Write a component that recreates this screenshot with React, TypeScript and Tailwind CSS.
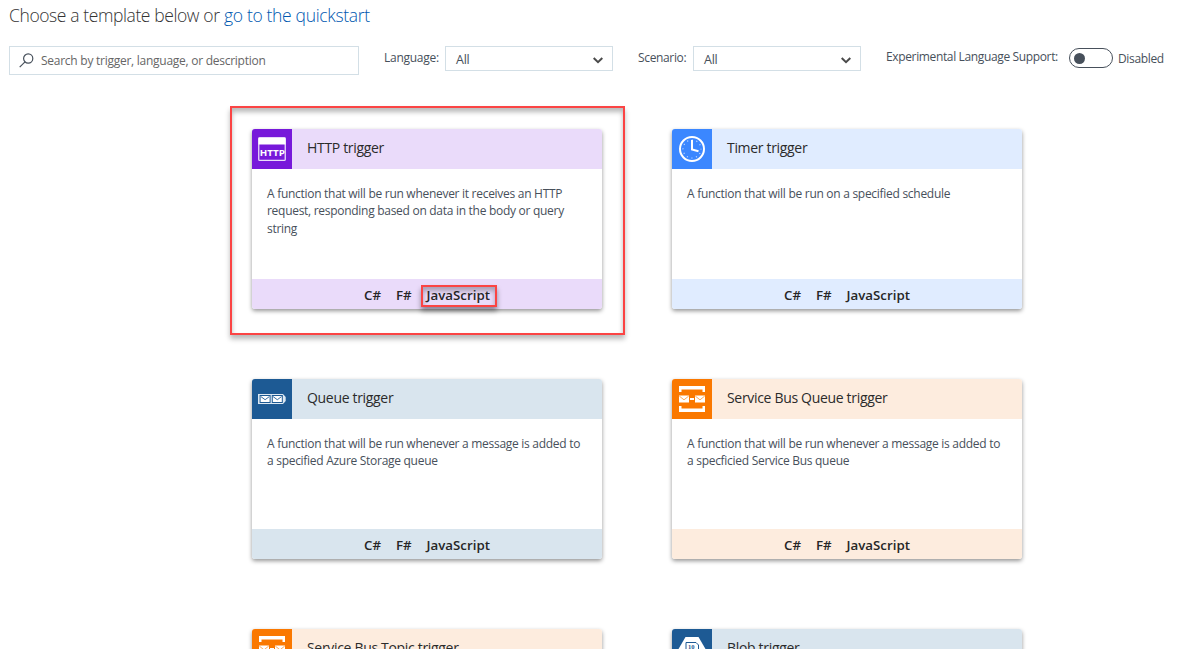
import React from "react";

type Trigger = {
  title: string;
  text: string[];
  accent: string;
  tint: string;
  icon: React.ReactNode;
  highlighted?: boolean;
};

const HttpIcon = () => (
  <svg width="40" height="40" viewBox="0 0 40 40">
    <rect x="6.75" y="9" width="26.5" height="22.4" rx="1" fill="none" stroke="#e9dcfa" strokeWidth="1.3" />
    <rect x="6.5" y="8.5" width="27" height="7" fill="#fff" />
    <text x="20.3" y="26.6" textAnchor="middle" textLength="25" lengthAdjust="spacingAndGlyphs" fontSize="9.6" fontWeight="700" fill="#fff" fontFamily="Open Sans, sans-serif">HTTP</text>
  </svg>
);

const TimerIcon = () => (
  <svg width="40" height="40" viewBox="0 0 40 40" fill="none" stroke="#fff">
    <circle cx="20" cy="20" r="12" strokeWidth="2" />
    <path d="M20 11V20.5L26.5 22.3" strokeWidth="2" />
    <circle cx="20" cy="20" r="9" strokeWidth="1.2" strokeDasharray="1.2 3.512" strokeDashoffset="0.6" opacity=".65" />
  </svg>
);

const Envelope = ({ x, y, w = 9, h = 7, line }: { x: number; y: number; w?: number; h?: number; line: string }) => (
  <g>
    <rect x={x} y={y} width={w} height={h} fill="#fff" />
    <path d={`M${x + 0.3} ${y + 0.6}L${x + w / 2} ${y + h * 0.62}L${x + w - 0.3} ${y + 0.6}`} fill="none" stroke={line} strokeWidth=".9" />
  </g>
);

const QueueIcon = () => (
  <svg width="40" height="40" viewBox="0 0 40 40">
    <path d="M6 15H31L33.7 18V22L31 25H6Z" fill="#dce8f2" />
    <rect x="7.6" y="16" width="11" height="8" fill="#1d5a94" />
    <rect x="19.8" y="16" width="11" height="8" fill="#1d5a94" />
    <Envelope x={8.6} y={17} w={9} h={6} line="#1d5a94" />
    <Envelope x={20.8} y={17} w={9} h={6} line="#1d5a94" />
  </svg>
);

const ServiceBusIcon = () => (
  <svg width="40" height="40" viewBox="0 0 40 40">
    <path d="M7 13V7H33V13H30.5V10.5H9.5V13ZM7 27V33H33V27H30.5V29.5H9.5V27Z" fill="#fff" />
    <Envelope x={7} y={16.5} w={10} line="#fba04e" />
    <Envelope x={23} y={16.5} w={10} line="#fba04e" />
    <path d="M18 20H22" stroke="#fff" strokeWidth="1.8" />
  </svg>
);

const BlobIcon = () => (
  <svg width="40" height="40" viewBox="0 0 40 40">
    <path d="M13.5 8H26.5L33.5 20L26.5 32H13.5L6.5 20Z" fill="#fff" />
    <path d="M14 13.5H24L26.5 16V27.5H14Z" fill="#fff" stroke="#1d5a94" />
    <text x="16" y="19.8" fontSize="6.5" fontWeight="700" fill="#1d5a94" fontFamily="Liberation Serif, serif">10</text>
  </svg>
);

const triggers: Trigger[] = [
  {
    title: "HTTP trigger",
    text: ["A function that will be run whenever it receives an HTTP", "request, responding based on data in the body or query", "string"],
    accent: "bg-[#7719da]", tint: "bg-[#eadbfa]", icon: <HttpIcon />, highlighted: true,
  },
  { title: "Timer trigger", text: ["A function that will be run on a specified schedule"], accent: "bg-[#3b87ff]", tint: "bg-[#e0ecff]", icon: <TimerIcon /> },
  {
    title: "Queue trigger",
    text: ["A function that will be run whenever a message is added to", "a specified Azure Storage queue"],
    accent: "bg-[#1d5a94]", tint: "bg-[#d9e5ee]", icon: <QueueIcon />,
  },
  {
    title: "Service Bus Queue trigger",
    text: ["A function that will be run whenever a message is added to", "a specficied Service Bus queue"],
    accent: "bg-[#fa7800]", tint: "bg-[#fdecde]", icon: <ServiceBusIcon />,
  },
  { title: "Service Bus Topic trigger", text: [], accent: "bg-[#fa7800]", tint: "bg-[#fdecde]", icon: <ServiceBusIcon /> },
  { title: "Blob trigger", text: [], accent: "bg-[#1d5a94]", tint: "bg-[#d9e5ee]", icon: <BlobIcon /> },
];

function Card({ t }: { t: Trigger }) {
  return (
    <div className="relative h-[180px] w-[350px]">
      <div className="flex h-full flex-col overflow-hidden rounded-[3px] bg-white shadow-[0_2px_4px_rgba(0,0,0,0.42)]">
        <div className={`flex h-10 shrink-0 ${t.tint}`}>
          <div className={`size-10 ${t.accent}`}>{t.icon}</div>
          <h2 className="whitespace-nowrap pl-[15px] text-[14px] leading-[37px] tracking-[-0.32px] text-[#2b2b2b]">{t.title}</h2>
        </div>
        {t.text.length > 0 && (
          <>
            <div className="grow px-[15px] pt-[15.6px] text-[12px] leading-[17.6px] tracking-[-0.285px] text-[#47505b]">
              {t.text.map((line) => <p key={line} className="whitespace-nowrap">{line}</p>)}
            </div>
            <div className={`flex h-[30px] shrink-0 pl-28 text-[13.3px] font-semibold leading-8 text-[#262626] ${t.tint}`}>
              <span className="w-8">C#</span>
              <span className="w-[30.5px]">F#</span>
              <span>JavaScript</span>
            </div>
          </>
        )}
      </div>
      {t.highlighted && (
        <>
          <div className="absolute -left-[22px] -top-[23px] h-[229px] w-[395px] border-2 border-[#fb4444] shadow-[0_4px_5px_rgba(0,0,0,0.28),inset_0_4px_5px_rgba(0,0,0,0.28)]" />
          <div className="absolute left-[169px] top-[156px] h-[22px] w-[76px] border-2 border-[#fb4444] shadow-[0_4px_5px_rgba(0,0,0,0.4),inset_0_4px_5px_rgba(0,0,0,0.28)]" />
        </>
      )}
    </div>
  );
}

function Select() {
  return (
    <div className="flex h-[25px] w-[168px] items-center justify-between border border-[#d3dfe6] pl-[10px] pr-[9px] text-[12.5px] text-[#47505b]">
      <span className="pt-[3px]">All</span>
      <svg className="mt-[3px]" width="10" height="7" viewBox="0 0 10 7" fill="none" stroke="#4a4a4a" strokeWidth="2"><path d="M.7 1L5 5.2L9.3 1" /></svg>
    </div>
  );
}

export default function App() {
  return (
    <div className="h-[649px] w-[1178px] overflow-hidden bg-white font-['Open_Sans',sans-serif]">
      <h1 className="flex h-[46px] whitespace-nowrap pl-[9px] text-[17.5px] font-light leading-[30px] tracking-[-0.4px] text-[#333]">
        <span className="w-[215px]">Choose a template below or</span>
        <a className="tracking-[-0.33px] text-[#0058b0]">go to the quickstart</a>
      </h1>
      <div className="flex h-[83px] items-start whitespace-nowrap pl-[9px] text-[12px] leading-6 tracking-[-0.26px] text-[#47505b]">
        <div className="flex h-[29px] w-[350px] items-center border border-[#d3dfe6] pl-[9px] text-[#666]">
          <svg className="mr-[7px]" width="15" height="15" viewBox="0 0 15 15" fill="none" stroke="#47505b" strokeWidth="1.2"><circle cx="9.2" cy="5.5" r="4.6" /><path d="M6 8.9L.7 14.2" /></svg>
          <span>Search by trigger, language, or description</span>
        </div>
        <span className="ml-[25px] w-[61px]">Language:</span>
        <Select />
        <span className="ml-[25px] w-[55px] tracking-[-0.35px]">Scenario:</span>
        <Select />
        <span className="ml-[25px] w-[183px] leading-[22px] tracking-[-0.36px]">Experimental Language Support:</span>
        <span className="mt-[2px] flex h-5 w-11 items-center rounded-full border border-[#47505b] pl-[4px]"><i className="size-[11px] rounded-full bg-[#47505b]" /></span>
        <span className="ml-[5px] leading-[25px] tracking-[-0.35px]">Disabled</span>
      </div>
      <main className="grid grid-cols-[350px_350px] gap-[70px] pl-[252px]">
        {triggers.map((t) => <Card key={t.title} t={t} />)}
      </main>
    </div>
  );
}
